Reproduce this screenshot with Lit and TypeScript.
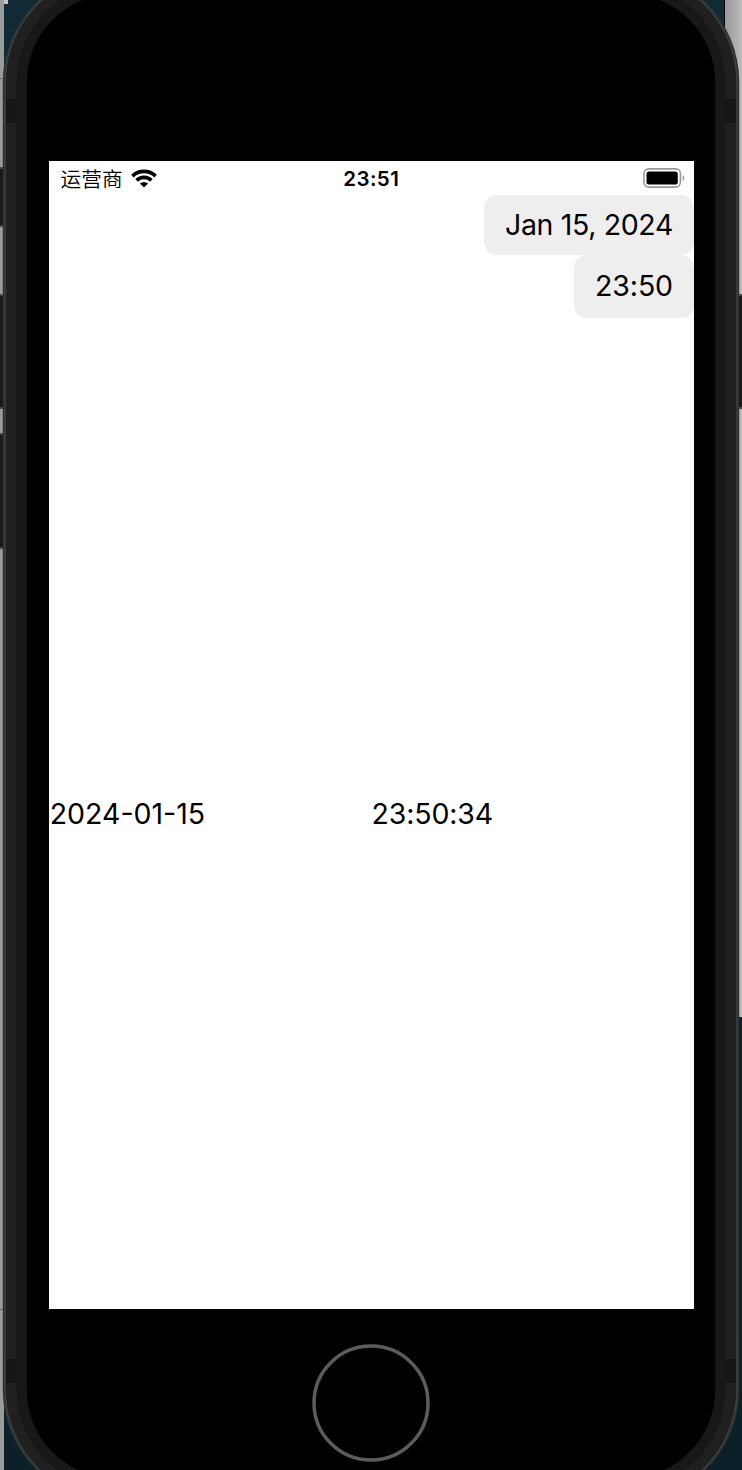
import { LitElement, html, css, svg } from "lit";
import { customElement } from "lit/decorators.js";

@customElement("phone-frame")
class PhoneFrame extends LitElement {
  static styles = css`
    :host { display: block; width: 742px; height: 1470px; }
    svg { display: block; }
  `;
  render() {
    const body = (x: number, fill: string) => svg`<rect x=${x} y=${-33 + x} width=${742 - 2 * x} height=${1538 - 2 * x} rx=${115 - x} fill=${fill}></rect>`;
    const buttons = [[-8, 168, 58], [-8, 295, 113], [-8, 434, 114], [738, 295, 113]];
    return html`<svg width="742" height="1470" viewBox="0 0 742 1470">
      <defs>
        <linearGradient id="wall" x1="0" y1="0" x2="0" y2="1">
          <stop offset="0" stop-color="#102b36"></stop>
          <stop offset="1" stop-color="#0b2028"></stop>
        </linearGradient>
        <linearGradient id="edge" x1="0" y1="0" x2="1" y2="0">
          <stop offset="0" stop-color="#989898"></stop>
          <stop offset="1" stop-color="#bcbcbc"></stop>
        </linearGradient>
      </defs>
      <rect width="742" height="1470" fill="url(#wall)"></rect>
      <rect width="4" height="1470" fill="#999b9c"></rect>
      <rect x="4" width="4" height="4" fill="#c5c5c5"></rect>
      <rect x="725" width="17" height="1017" fill="url(#edge)"></rect>
      <rect x="724" width="1" height="30" fill="#030809"></rect>
      <rect y="78" width="4" height="1" fill="#707070"></rect>
      <rect y="1309" width="4" height="1" fill="#606060"></rect>
      ${buttons.map(([x, y, h]) => svg`<rect x=${x} y=${y} width="13" height=${h} rx="1" fill="#191919" stroke="#484848" stroke-width="2"></rect>`)}
      ${body(2.8, "#2c3030")}
      ${body(4.2, "#3e4040")}
      ${body(5.8, "#202020")}
      <rect x="6" y="99" width="11" height="24" fill="#161616"></rect>
      <rect x="725" y="99" width="11" height="24" fill="#161616"></rect>
      <rect x="6" y="1359" width="11" height="24" fill="#161616"></rect>
      <rect x="725" y="1359" width="11" height="24" fill="#161616"></rect>
      ${body(16.5, "#181818")}
      ${body(26.8, "#000")}
      <circle cx="371" cy="1403" r="57" fill="none" stroke="#5c5c5c" stroke-width="3.5"></circle>
    </svg>`;
  }
}

@customElement("status-bar")
class StatusBar extends LitElement {
  static styles = css`
    :host { display: grid; grid-template-columns: 1fr auto 1fr; align-items: center; height: 34px; box-sizing: border-box; padding: 0 9px 1px 11.5px; font-size: 20.5px; }
    .carrier { display: flex; align-items: center; gap: 8px; padding-top: 2px; font-family: "Noto Sans CJK SC", sans-serif; font-weight: 350; line-height: 31px; }
    .carrier span { font-size: 20.7px; }
    .carrier svg { margin-bottom: 1px; }
    .time { font-weight: 600; letter-spacing: 0.4px; line-height: 31px; padding: 2px 3px 0 0; }
    .battery { justify-self: end; }
    svg { display: block; }
  `;
  render() {
    return html`
      <div class="carrier"><span>运营商</span>
        <svg width="26" height="20" viewBox="0 0 26 20">
          <g fill="none" stroke="#000" stroke-width="3.7">
            <path d="M1.4 8.1a16.6 16.6 0 0 1 23.2 0"></path>
            <path d="M5.6 12.4a10.6 10.6 0 0 1 14.8 0"></path>
          </g>
          <path d="M8.9 15.6a5.9 5.9 0 0 1 8.2 0L13 19.6z"></path>
        </svg>
      </div>
      <div class="time">23:51</div>
      <svg class="battery" width="42" height="20" viewBox="0 0 42 20">
        <rect x="0.9" y="0.9" width="36.5" height="18.2" rx="4.8" fill="none" stroke="#999" stroke-width="1.6"></rect>
        <rect x="3.5" y="3.4" width="31.3" height="13.2" rx="2.7"></rect>
        <path d="M39.6 7v6q1.7-.8 1.7-3t-1.7-3z" fill="#999"></path>
      </svg>`;
  }
}

@customElement("app-root")
class AppRoot extends LitElement {
  static styles = css`
    :host { display: grid; width: 742px; height: 1470px; overflow: hidden; font-family: Inter, "Noto Sans CJK SC", sans-serif; color: #000; }
    phone-frame, .screen { grid-area: 1 / 1; }
    .screen { display: flex; flex-direction: column; box-sizing: border-box; width: 645px; height: 1148px; margin: 161px 0 0 49px; background: #fff; font-size: 28.5px; }
    .pickers { display: flex; flex-direction: column; align-items: flex-end; }
    .pill { display: flex; align-items: center; box-sizing: border-box; padding: 0 21px 2px; border-radius: 13px; background: #eeeeef; white-space: nowrap; }
    .date { height: 60px; letter-spacing: -0.35px; }
    .clock { height: 63px; letter-spacing: -0.1px; }
    .values { display: grid; grid-template-columns: 1fr 1fr; margin-top: 478px; line-height: 36px; }
    .day { padding-left: 0.7px; }
    .moment { letter-spacing: -0.15px; }
  `;
  render() {
    return html`
      <phone-frame></phone-frame>
      <main class="screen">
        <status-bar></status-bar>
        <div class="pickers">
          <div class="pill date">Jan 15, 2024</div>
          <div class="pill clock">23:50</div>
        </div>
        <div class="values"><span class="day">2024-01-15</span><span class="moment">23:50:34</span></div>
      </main>`;
  }
}
